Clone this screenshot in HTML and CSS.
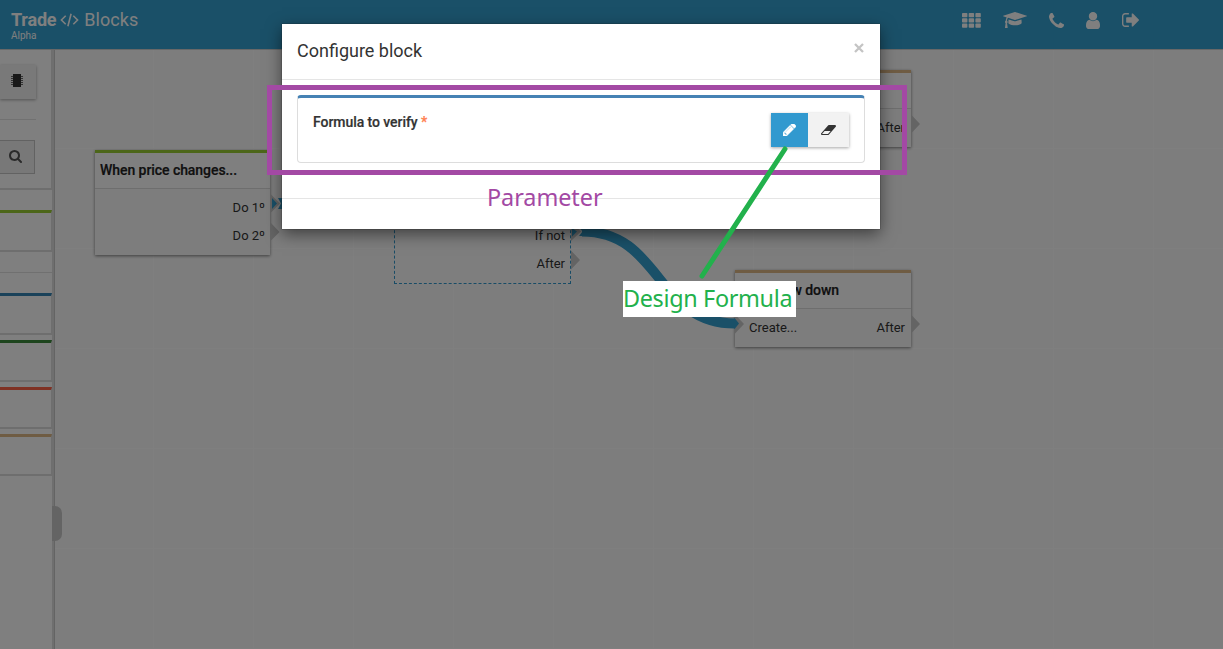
FILE: index.html
```
<!DOCTYPE html>
<html lang="en">
<head>
<meta charset="utf-8">
<title>Trade Blocks</title>
<link rel="stylesheet" href="styles.css">
</head>
<body>
<div class="app">
  <header class="navbar">
    <div class="brand">
      <div class="brand-name"><b>Trade</b>
        <svg class="code" viewBox="0 0 20 14"><path d="M6 2.500L1.500 7L6 11.500M14 2.500L18.500 7L14 11.500M11.700 .5L8.300 13.500"/></svg>
        <span>Blocks</span></div>
      <div class="brand-tag">Alpha</div>
    </div>
    <nav class="nav-icons">
      <svg class="i-th" viewBox="0 0 19 15"><g id="row"><rect width="5.400" height="4.200" rx=".8"/><rect x="6.700" width="5.400" height="4.200" rx=".8"/><rect x="13.400" width="5.400" height="4.200" rx=".8"/></g><use href="#row" y="5.300"/><use href="#row" y="10.600"/></svg>
      <svg class="i-cap" viewBox="0 128 2304 1536"><path d="M1774 836l18 316q4 69-82 128t-235 93.500-323 34.500-323-34.500-235-93.500-82-128l18-316 574 181q22 7 48 7t48-7zm530-324q0 23-22 31l-1120 352q-4 1-10 1t-10-1l-652-206q-43 34-71 111.500t-34 178.500q63 36 63 109 0 69-58 107l58 433q2 14-8 25-9 11-24 11h-192q-15 0-24-11-10-11-8-25l58-433q-58-38-58-107 0-73 65-111 11-207 98-330l-333-104q-22-8-22-31t22-31l1120-352q4-1 10-1t10 1l1120 352q22 8 22 31z"/></svg>
      <svg class="i-phone" viewBox="192 128 1408 1408"><path d="M1600 1240q0 27-10 70.500t-21 68.500q-21 50-122 106-94 51-186 51-27 0-53-3.500t-57.500-12.500-47-14.500-55.500-20.500-49-18q-98-35-175-83-127-79-264-216t-216-264q-48-77-83-175-3-9-18-49t-20.500-55.500-14.500-47-12.500-57.500-3.500-53q0-92 51-186 56-101 106-122 25-11 68.500-21t70.500-10q14 0 21 3 18 6 53 76 11 19 30 54t35 63.500 31 53.500q3 4 17.500 25t21.500 35.500 7 28.500q0 20-28.500 50t-62 55-62 53-28.500 46q0 9 5 22.500t8.500 20.500 14 24 11.500 19q76 137 174 235t235 174q2 1 19 11.500t24 14 20.500 8.500 22.500 5q18 0 46-28.500t53-62 55-62 50-28.500q14 0 28.500 7t35.500 21.500 25 17.500q25 15 53.500 31t63.500 35 54 30q70 35 76 53 3 7 3 21z"/></svg>
      <svg class="i-user" viewBox="256 128 1280 1536"><path d="M1536 1399q0 109-62.500 187t-150.500 78h-854q-88 0-150.500-78t-62.500-187q0-85 8.500-160.500t31.500-152 58.500-131 94-89 134.500-34.500q131 128 313 128t313-128q76 0 134.500 34.500t94 89 58.500 131 31.500 152 8.500 160.500zm-256-887q0 159-112.500 271.500t-271.500 112.500-271.500-112.500-112.500-271.500 112.500-271.500 271.500-112.500 271.500 112.500 112.500 271.500z"/></svg>
      <svg class="i-out" viewBox="64 256 1568 1280"><path d="M704 1440q0 4 1 20t.5 26.500-3 23.500-10 19.500-20.500 6.500h-320q-119 0-203.500-84.500t-84.500-203.500v-704q0-119 84.500-203.500t203.500-84.500h320q13 0 22.500 9.500t9.500 22.500q0 4 1 20t.5 26.500-3 23.500-10 19.500-20.500 6.500h-320q-66 0-113 47t-47 113v704q0 66 47 113t113 47h312l11.500 1 11.500 3 8 5.500 7 9 2 13.500zm928-544q0 26-19 45l-544 544q-19 19-45 19t-45-19-19-45v-288h-448q-26 0-45-19t-19-45v-384q0-26 19-45t45-19h448v-288q0-26 19-45t45-19 45 19l544 544q19 19 19 45z"/></svg>
    </nav>
  </header>
  <div class="workspace">
    <aside class="sidebar">
      <div class="tools">
        <div class="chip-btn"><svg viewBox="0 0 12 13"><path class="pins" d="M0 2.500h12M0 4.500h12M0 6.500h12M0 8.500h12M0 10.500h12"/><path d="M2 0h8v13H2z"/></svg></div>
        <div class="rule"></div>
        <div class="search-btn"><svg viewBox="64 128 1664 1664"><path d="M1216 832q0-185-131.500-316.500t-316.500-131.500-316.500 131.500-131.500 316.500 131.500 316.500 316.500 131.500 316.500-131.500 131.500-316.500zm512 832q0 52-38 90t-90 38q-54 0-90-38l-343-342q-179 124-399 124-143 0-273.500-55.500t-225-150-150-225-55.500-273.500 55.500-273.500 150-225 225-150 273.500-55.500 273.500 55.500 225 150 150 225 55.500 273.500q0 220-124 399l343 343q37 37 37 90z"/></svg></div>
      </div>
      <div class="palette">
        <div class="item lime"></div>
        <div class="divider"></div>
        <div class="item blue"></div>
        <div class="item green"></div>
        <div class="item red"></div>
        <div class="item tan"></div>
      </div>
    </aside>
    <div class="splitter"></div>
    <main class="canvas">
      <div class="handle"></div>
      <section class="node price lime">
        <h3>When price changes...</h3>
        <div class="ports"><p><span></span><span>Do 1º</span></p><p><span></span><span>Do 2º</span></p></div>
      </section>
      <section class="node check">
        <h3></h3>
        <div class="ports"><p></p><p><span></span><span>If not</span></p><p><span></span><span>After</span></p></div>
      </section>
      <section class="node upper tan">
        <h3></h3>
        <div class="ports"><p><span></span><span>After</span></p></div>
      </section>
      <section class="node slow tan">
        <h3>Slow down</h3>
        <div class="ports"><p><span>Create...</span><span>After</span></p></div>
      </section>
      <svg class="wires" viewBox="0 0 1223 649">
        <path class="port" d="M270.500 194l9.500 9.500L270.500 213zM270.500 222.500l9 9.500L270.500 241zM571 222l10 9.500L571 241zM571 250.500l9 9.500L571 269.500zM911 114.500l9 9.500L911 133.500zM911 314.500l9 9.500L911 333.500z"/>
        <path class="wire" d="M582 231.500C662 231.500 655 323.500 735 323.500"/>
        <path class="port" d="M735 314.500l9 9.500L735 333.500z"/>
        <path class="wire-end" d="M272 198l5 5.500L272 209zM278 198h8v11h-8l3-5.500zM572 228l5 3.500-5 5zM579 227h5v9h-5l3.500-4.500zM734 318.500h1l4 5-4 5h-1z"/>
      </svg>
    </main>
  </div>
</div>
<div class="backdrop"></div>
<div class="modal">
  <div class="modal-head"><h4>Configure block</h4>
    <svg class="close" viewBox="0 0 10 10"><path d="M1 1l8 8M9 1L1 9"/></svg></div>
  <div class="modal-body">
    <div class="param">
      <label>Formula to verify <span class="req">*</span></label>
      <div class="actions">
        <div class="edit"><svg viewBox="128 256 1515 1408"><path d="M491 1536l91-91-235-235-91 91v107h128v128h107zm523-928q0-22-22-22-10 0-17 7l-542 542q-7 7-7 17 0 22 22 22 10 0 17-7l542-542q7-7 7-17zm-54-192l416 416-832 832h-416v-416zm683 96q0 53-37 90l-166 166-416-416 166-165q36-38 90-38 53 0 91 38l235 234q37 39 37 91z"/></svg></div>
        <div class="erase"><svg viewBox="0 256 1920 1280"><path d="M896 1408l336-384h-768l-336 384h768zm1013-1077q15 34 9.500 71.500t-30.500 65.500l-896 1024q-38 44-96 44h-768q-38 0-69.500-20.500t-47.500-54.500q-15-34-9.500-71.500t30.500-65.500l896-1024q38-44 96-44h768q38 0 69.500 20.500t47.500 54.500z"/></svg></div>
      </div>
    </div>
  </div>
  <div class="modal-foot"></div>
</div>
<div class="frame"></div>
<div class="note note-param">Parameter</div>
<svg class="pointer" viewBox="0 0 1223 649"><path d="M785 149L702 276"/></svg>
<div class="note note-design">Design Formula</div>
</body>
</html>
```

FILE: styles.css
```
* { box-sizing: border-box; }
body { margin: 0; width: 1223px; height: 649px; overflow: hidden; position: relative; font: 13px Roboto, sans-serif; color: #333; }
h3, h4, p { margin: 0; }
svg { display: block; flex: none; }
.app { height: 649px; display: flex; flex-direction: column; background: #fff; }
.navbar { height: 50px; flex: none; background: #34a0d0; border-bottom: 1px solid #d0d0d0; display: flex; justify-content: space-between; color: #fff; padding: 9px 84px 0 11px; }
.brand-name { display: flex; align-items: center; height: 21px; font-size: 18px; }
.brand-name b { font-weight: 700; letter-spacing: -.2px; }
.brand-name span { letter-spacing: .05px; }
.code { width: 19px; height: 14px; margin: 0 5px 0 4px; fill: none; stroke: #fff; stroke-width: 1.7; }
.brand-tag { font-size: 10px; line-height: 11px; }
.nav-icons { display: flex; align-items: center; height: 22px; fill: #fff; }
.i-th { width: 19px; height: 15px; }
.i-cap { width: 24px; height: 16px; margin-left: 22px; }
.i-phone { width: 15px; height: 15px; margin-left: 22px; }
.i-user { width: 14px; height: 17px; margin-left: 22px; }
.i-out { width: 17px; height: 14px; margin-left: 22px; }
.workspace { flex: 1; display: flex; }
.sidebar { width: 52px; flex: none; }
.tools { height: 140px; border-right: 1px solid #dcdcdc; border-bottom: 2px solid #dcdcdc; padding-top: 15px; }
.chip-btn { width: 36px; height: 34px; background: #f2f2f2; box-shadow: 0 1px 3px rgba(0,0,0,.35); padding: 9px 0 0 11px; }
.chip-btn svg { width: 12px; height: 13px; fill: #333; }
.pins { stroke: #666; stroke-width: 1; }
.rule { height: 1px; width: 36px; background: #e2e2e2; margin: 20px 0; }
.search-btn { width: 35px; height: 34px; background: #f0f0f0; border: 1px solid #c4c4c4; border-left: 0; padding: 9px 0 0 9px; }
.search-btn svg { width: 13px; height: 13px; fill: #555; }
.palette { padding-top: 20px; display: flex; flex-direction: column; gap: 5px; }
.item { height: 42px; border-right: 1px solid #dcdcdc; border-bottom: 2px solid #dcdcdc; border-top: 3px solid; }
.lime, .item.lime { border-top-color: #99cc33; }
.item.blue { border-top-color: #3584b5; }
.item.green { border-top-color: #3c8a3c; }
.item.red { border-top-color: #ff6347; }
.tan, .item.tan { border-top-color: #deb887; }
.divider { height: 1px; background: #e0e0e0; margin: 15px 0; }
.splitter { width: 3px; background: #dedede; border-right: 1px solid #c8c8c8; flex: none; }
.canvas { flex: 1; position: relative; background-color: #fbfbfb; background-image: linear-gradient(to right, #fff 1px, transparent 1px), linear-gradient(#fff 1px, transparent 1px); background-size: 100px 100px; background-position: 98px 0, 0 98px; }
.handle { position: absolute; left: -3px; top: 456px; width: 10px; height: 35px; background: #c8c8c8; border-radius: 0 7px 7px 0; }
.node { position: absolute; width: 175px; background: #fff; border-top-width: 3px; border-top-style: solid; box-shadow: 0 1px 3px rgba(0,0,0,.5); }
.node h3 { height: 36px; border-bottom: 1px solid #dcdcdc; font-size: 14px; line-height: 35px; font-weight: 500; padding-left: 5px; color: #222; letter-spacing: -.06px; -webkit-text-stroke: .2px #222; }
.ports { background: #fafafa; padding: 5px 6px 5px 14px; }
.ports p { display: flex; justify-content: space-between; height: 28px; line-height: 28px; }
.price { left: 40px; top: 100px; }
.price .ports { padding-right: 5px; }
.check { left: 339px; top: 99px; width: 177px; border: 1px dashed #3399cc; box-shadow: none; }
.check .ports { padding-top: 7px; padding-right: 5px; background: #fdfdfd; height: 96px; }
.check h3 { height: 37px; }
.upper { left: 680px; top: 20px; width: 176px; }
.slow { left: 680px; top: 220px; width: 176px; }
.slow h3 { padding: 0 72px 0 0; text-align: right; }
.wires { position: absolute; left: -55px; top: -50px; width: 1223px; height: 649px; }
.port { fill: #c8c8c8; }
.wire { fill: none; stroke: #34a0d0; stroke-width: 10; }
.wire-end { fill: #34a0d0; }
.backdrop { position: absolute; inset: 0; background: rgba(0,0,0,.5); }
.modal { position: absolute; left: 282px; top: 24px; width: 598px; height: 205px; background: #fff; box-shadow: 0 5px 15px rgba(0,0,0,.5), 0 0 1px #222; display: flex; flex-direction: column; }
.modal-head { height: 56px; border-bottom: 1px solid #e5e5e5; display: flex; justify-content: space-between; padding: 15px 16px 0 15px; }
.modal-head h4 { font-size: 18px; line-height: 24px; font-weight: 400; }
.close { width: 10px; height: 10px; margin-top: 4px; stroke: #c4c4c4; stroke-width: 2.300; }
.modal-body { height: 118px; padding: 15px; }
.param { height: 68px; border: 1px solid #ddd; border-top: 3px solid #4682b4; border-radius: 4px; display: flex; justify-content: space-between; padding: 15px 15px 0 15px; }
.param label { font-size: 14px; line-height: 19px; font-weight: 500; letter-spacing: -.06px; -webkit-text-stroke: .2px #333; }
.req { color: #ff7f50; -webkit-text-stroke: .25px #ff7f50; }
.actions { display: flex; height: 34px; box-shadow: 0 1px 3px rgba(0,0,0,.35); }
.actions div { display: flex; align-items: center; justify-content: center; }
.edit { width: 37px; background: #3199cf; }
.edit svg { width: 13px; height: 12px; fill: #fff; stroke: #fff; stroke-width: 60; }
.erase { width: 41px; background: #f2f2f2; }
.erase svg { width: 15px; height: 10px; fill: #333; }
.modal-foot { flex: 1; border-top: 1px solid #e5e5e5; }
.frame { position: absolute; left: 267px; top: 85px; width: 640px; height: 90px; border: 5px solid #a349a4; }
.note { position: absolute; font-family: "Noto Sans", sans-serif; font-size: 23.4px; line-height: 36px; white-space: nowrap; }
.note-param { left: 487px; top: 179px; color: #a349a4; letter-spacing: -.05px; }
.pointer { position: absolute; left: 0; top: 0; width: 1223px; height: 649px; fill: none; stroke: #22b14c; stroke-width: 5; stroke-linecap: round; }
.note-design { left: 623px; top: 281px; width: 173px; height: 36px; line-height: 34px; background: #fff; color: #22b14c; letter-spacing: -.33px; }
```
